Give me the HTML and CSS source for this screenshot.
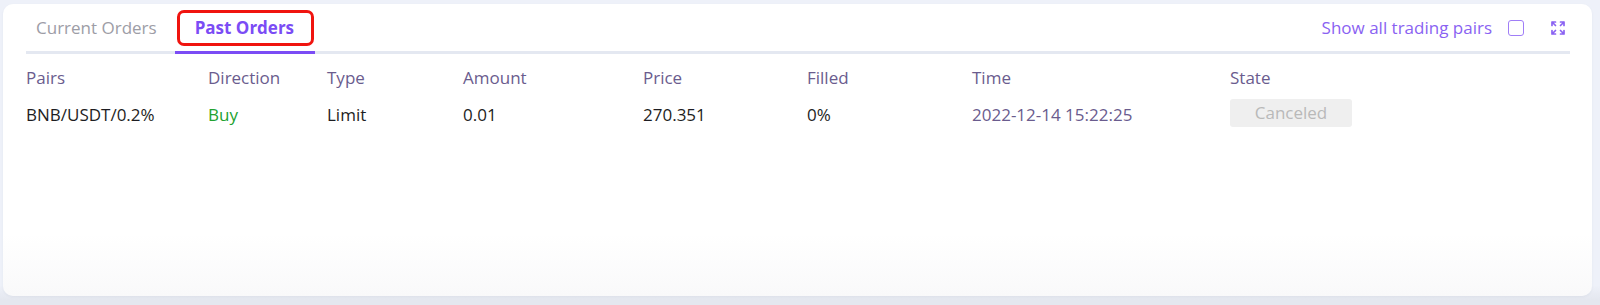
FILE: index.html
```html
<!DOCTYPE html>
<html lang="en">
<head>
<meta charset="utf-8">
<title>Past Orders</title>
<link rel="stylesheet" href="styles.css">
</head>
<body>
<div class="page">
  <div class="card">
    <div class="tabs">
      <div class="tab">Current Orders</div>
      <div class="tab tab-active">Past Orders<span class="highlight"></span></div>
      <div class="controls">
        <span class="show-all">Show all trading pairs</span>
        <span class="checkbox"></span>
        <svg class="expand" width="16" height="16" viewBox="0 0 16 16" fill="none" stroke="currentColor" stroke-width="1.7" stroke-linecap="round" stroke-linejoin="round">
          <path d="M2 5.5V2h3.5M2 2l3.5 3.5"/>
          <path d="M14 5.5V2h-3.5M14 2l-3.5 3.5"/>
          <path d="M2 10.5V14h3.5M2 14l3.5-3.5"/>
          <path d="M14 10.5V14h-3.5M14 14l-3.5-3.5"/>
        </svg>
      </div>
    </div>
    <div class="table">
      <div class="row head">
        <div>Pairs</div>
        <div>Direction</div>
        <div>Type</div>
        <div>Amount</div>
        <div>Price</div>
        <div>Filled</div>
        <div>Time</div>
        <div>State</div>
      </div>
      <div class="row data">
        <div>BNB/USDT/0.2%</div>
        <div class="buy">Buy</div>
        <div>Limit</div>
        <div>0.01</div>
        <div>270.351</div>
        <div>0%</div>
        <div class="time">2022-12-14 15:22:25</div>
        <div><span class="state">Canceled</span></div>
      </div>
    </div>
  </div>
</div>
</body>
</html>
```

FILE: styles.css
```css
html, body {
  margin: 0;
  padding: 0;
}
body {
  width: 1600px;
  height: 305px;
  overflow: hidden;
  background: linear-gradient(to bottom, #eef1f9 0, #eef1f9 285px, #e4e7ef 300px);
  font-family: "Open Sans", "Noto Sans", sans-serif;
  font-size: 17px;
}
.page {
  padding: 4px 8px 0 3px;
}
.card {
  height: 292px;
  box-sizing: border-box;
  background: linear-gradient(to bottom, #ffffff 0, #ffffff 230px, #f9f9fa 292px);
  border-radius: 10px;
  padding: 0 22px 0 23px;
  box-shadow: 0 1px 3px rgba(40, 50, 80, 0.05);
}
.tabs {
  display: flex;
  align-items: flex-end;
  height: 47px;
  border-bottom: 3px solid #e4e8f1;
}
.tab {
  position: relative;
  height: 47px;
  box-sizing: border-box;
  padding: 13px 10px 0;
  line-height: 22px;
  color: #9d9da6;
  margin-right: 8px;
  white-space: nowrap;
}
.tab-active {
  padding: 13px 21px 0 20px;
  font-weight: 700;
  color: #7b4cf5;
  height: 50px;
  margin-bottom: -3px;
  border-bottom: 3px solid #7b4cf5;
}
.highlight {
  position: absolute;
  left: 2px;
  top: 6px;
  width: 137px;
  height: 36px;
  box-sizing: border-box;
  border: 3px solid #f0140f;
  border-radius: 7px;
}
.controls {
  margin-left: auto;
  align-self: flex-start;
  display: flex;
  align-items: center;
  height: 24px;
  margin-top: 12px;
  color: #8a62f2;
}
.show-all {
  line-height: 22px;
}
.checkbox {
  width: 16px;
  height: 16px;
  box-sizing: border-box;
  border: 1.6px solid #a07ef7;
  border-radius: 3px;
  margin-left: 16px;
}
.expand {
  margin-left: 26px;
  margin-right: 4px;
  color: #8a62f2;
}
.table {
  padding-top: 5px;
}
.row {
  display: grid;
  grid-template-columns: 182px 119px 136px 180px 164px 165px 258px 1fr;
  align-items: center;
}
.head {
  height: 36px;
  color: #6a5c8e;
}
.data {
  height: 38px;
  color: #1d1d22;
}
.buy {
  color: #22a230;
}
.time {
  color: #6a5c8e;
}
.state {
  display: inline-block;
  width: 122px;
  height: 28px;
  line-height: 28px;
  text-align: center;
  background: #efefef;
  border-radius: 3px;
  color: #b9b9b9;
  margin-top: -2px;
  vertical-align: middle;
}
```
